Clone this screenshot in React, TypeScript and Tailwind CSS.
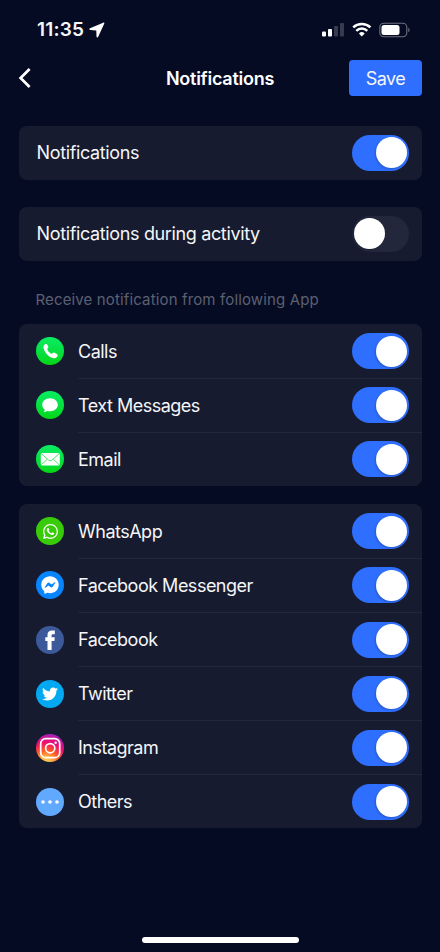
import React, { useState } from 'react';
import clsx from 'clsx';
import {
  FaFacebookMessenger,
  FaTwitter,
  FaWhatsapp,
} from 'react-icons/fa';

interface ToggleProps {
  checked: boolean;
  label: string;
  onChange: () => void;
}

interface AppItem {
  id: string;
  label: string;
  badge: string;
  icon: React.ReactNode;
}

// Phone, messages and mail share the same green badge
const green = 'bg-linear-to-b from-[#0aed62] to-[#04d60b]';

const systemApps: AppItem[] = [
  {
    id: 'calls',
    label: 'Calls',
    badge: green,
    icon: (
      <svg width="28" height="28" viewBox="0 0 28 28" fill="#fff">
        <path d="M8.1 8.1c.8-1 2-1.500 2.700-.9.9.8 1.500 2 1.600 2.900.1.900-1.200 1.300-1.100 2.200.2 1.500 2.800 4.200 4.300 4.500.9.100 1.300-1.300 2.300-1.200.9.200 3.300 1.500 3.700 2.100.7 1.100-.9 2.900-2.500 3.500-2 .6-5.700-1.300-8.200-4-2.700-2.900-4.400-6.900-2.800-9.100z" />
      </svg>
    ),
  },
  {
    id: 'messages',
    label: 'Text Messages',
    badge: green,
    icon: (
      <svg width="28" height="28" viewBox="0 0 28 28" fill="#fff">
        <path d="M14 7.300c4.400 0 7.800 2.900 7.800 6.500s-3.400 6.500-7.800 6.500c-1 0-2-.1-2.900-.4-1 .8-2.300 1.200-3.700 1.100.9-.7 1.400-1.500 1.400-2.300-1.600-1.200-2.600-2.900-2.600-4.900 0-3.600 3.400-6.500 7.800-6.500z" />
      </svg>
    ),
  },
  {
    id: 'email',
    label: 'Email',
    badge: green,
    icon: (
      <svg width="28" height="28" viewBox="0 0 28 28">
        <rect x="4.800" y="8" width="19" height="12.400" rx="1.500" fill="#fff" />
        <path
          d="M5.300 8.600l7.300 6.500q1.700 1.300 3.400 0l7.300-6.500M5.400 19.800l5.800-5.600M23.200 19.800l-5.800-5.600"
          fill="none"
          stroke="#10dd3b"
          strokeWidth=".75"
        />
      </svg>
    ),
  },
];

const socialApps: AppItem[] = [
  {
    id: 'whatsapp',
    label: 'WhatsApp',
    badge: 'bg-[#38cb08]',
    icon: <FaWhatsapp size={17} />,
  },
  {
    id: 'messenger',
    label: 'Facebook Messenger',
    badge: 'bg-[#0785ff]',
    icon: <FaFacebookMessenger size={18} />,
  },
  {
    id: 'facebook',
    label: 'Facebook',
    badge: 'bg-[#3c5a99]',
    icon: (
      <svg width="28" height="28" viewBox="0 0 28 28" fill="#fff">
        <path d="M11.500 24V15.100H9.300v-3.800h2.200V9.100c0-3 1.500-4.600 4.700-4.600h2.600v3.800h-1.700c-1.200 0-1.500.5-1.500 1.400v1.600h3.200l-.4 3.800h-2.800V24z" />
      </svg>
    ),
  },
  {
    id: 'twitter',
    label: 'Twitter',
    badge: 'bg-[#03a9f0]',
    icon: <FaTwitter size={16} />,
  },
  {
    id: 'instagram',
    label: 'Instagram',
    badge:
      'bg-[radial-gradient(circle_at_35%_105%,#ffd35a_0%,#ffb347_20%,#ff5a25_38%,#ee0b72_62%,#a522b8_85%,#5146cf_100%)]',
    icon: (
      <svg width="28" height="28" viewBox="0 0 28 28" fill="none" stroke="#fff" strokeWidth="1.700">
        <rect x="4.700" y="4.700" width="19" height="19" rx="5" />
        <circle cx="14.200" cy="14.200" r="4.600" />
        <circle cx="19.600" cy="8.800" r="1.200" fill="#fff" stroke="none" />
      </svg>
    ),
  },
  {
    id: 'others',
    label: 'Others',
    badge: 'bg-[#61a8ff]',
    icon: (
      <svg width="28" height="28" viewBox="0 0 28 28" fill="#fff">
        <circle cx="7" cy="14" r="1.800" />
        <circle cx="14" cy="14" r="1.800" />
        <circle cx="21" cy="14" r="1.800" />
      </svg>
    ),
  },
];

function Toggle({ checked, label, onChange }: ToggleProps) {
  return (
    <button
      role="switch"
      aria-checked={checked}
      aria-label={label}
      onClick={onChange}
      className={clsx(
        'flex h-9 w-[57.500px] shrink-0 items-center rounded-full px-0.5',
        checked ? 'justify-end bg-[#2f6fff]' : 'justify-start bg-[#23273b]'
      )}
    >
      <span className="size-[31px] rounded-full bg-white shadow-[-1px_1px_2px_rgba(0,0,0,0.2)]" />
    </button>
  );
}

function StatusBar() {
  return (
    <div className="flex h-[60px] items-center justify-between pr-[29px] pl-[37px]">
      <div className="flex items-center gap-[5px]">
        <span className="pt-px text-[19px] font-semibold tracking-[0.2px]">11:35</span>
        <svg width="16" height="16" viewBox="0 0 16 16" fill="#fff">
          <path d="M14.200.7L1 6.300c-1 .5-.8 1.700.3 1.800l6 .4.200 6c.1 1.100 1.200 1.200 1.700.2l6-12.900c.4-.8-.1-1.500-1-1.100z" />
        </svg>
      </div>
      <div className="flex items-center">
        <svg width="23" height="16" viewBox="0 0 23 16" fill="#fff">
          <rect x="0" y="9.500" width="4" height="5" rx="1" />
          <rect x="6" y="7" width="4" height="7.500" rx="1" />
          <rect x="12" y="4" width="4" height="10.500" rx="1" opacity=".2" />
          <rect x="18" y="1" width="4" height="13.500" rx="1" opacity=".2" />
        </svg>
        <svg className="ml-[7px]" width="20" height="16" viewBox="0 0 20 16" fill="none" stroke="#fff" strokeWidth="2.500">
          <path d="M1.200 5.400a12.600 12.600 0 0 1 17.200 0" />
          <path d="M4.300 8.800a8 8 0 0 1 11 0" />
          <path d="M9.800 14.500l-2.900-3a4.200 4.200 0 0 1 5.800 0z" fill="#fff" stroke="none" />
        </svg>
        <svg className="ml-[7px]" width="32" height="16" viewBox="0 0 32 16">
          <rect x=".8" y="1.200" width="27" height="13.600" rx="4" fill="none" stroke="#6d7080" strokeWidth="1.100" />
          <rect x="2.500" y="2.900" width="18" height="10.200" rx="2.500" fill="#fff" />
          <path d="M29.300 5.700c1.700.6 1.700 4 0 4.600z" fill="#6d7080" />
        </svg>
      </div>
    </div>
  );
}

export default function App() {
  const [enabled, setEnabled] = useState<Record<string, boolean>>({
    all: true,
    activity: false,
    calls: true,
    messages: true,
    email: true,
    whatsapp: true,
    messenger: true,
    facebook: true,
    twitter: true,
    instagram: true,
    others: true,
  });

  const toggle = (id: string) => {
    setEnabled((prev) => ({ ...prev, [id]: !prev[id] }));
  };

  const renderSetting = (id: string, label: string) => (
    <div className="flex h-[54px] items-center justify-between rounded-[8px] bg-[#171b30] pr-[12.500px] pl-[18px]">
      <span className="tracking-[-0.36px]">{label}</span>
      <Toggle checked={enabled[id]} label={label} onChange={() => toggle(id)} />
    </div>
  );

  const renderApps = (apps: AppItem[]) => (
    <div className="rounded-[8px] bg-[#171b30]">
      {apps.map((app, i) => (
        <div key={app.id} className="flex h-[54.100px] items-center pl-[17.500px]">
          <div
            className={clsx(
              'mt-px flex size-7 shrink-0 items-center justify-center rounded-full text-white',
              app.badge
            )}
          >
            {app.icon}
          </div>
          <div
            className={clsx(
              'ml-[14px] flex h-full flex-1 items-center justify-between pt-px pr-[12.500px]',
              i > 0 && 'shadow-[inset_0_1px_0_#22273a]'
            )}
          >
            <span className="tracking-[-0.5px]">{app.label}</span>
            <Toggle
              checked={enabled[app.id]}
              label={app.label}
              onChange={() => toggle(app.id)}
            />
          </div>
        </div>
      ))}
    </div>
  );

  return (
    <div className="flex h-[952px] w-[440px] flex-col bg-[#060b24] font-['Inter',sans-serif] text-[18px] text-[#f5f6f8]">
      <StatusBar />

      <header className="grid h-9 grid-cols-[1fr_auto_1fr] items-center pr-[18px] pl-[18px]">
        <button aria-label="Back">
          <svg width="14" height="22" viewBox="0 0 14 22" fill="none" stroke="#fff" strokeWidth="2.700">
            <path d="M11.600 2l-9 9 9 9" />
          </svg>
        </button>
        <h1 className="text-[18px] font-semibold tracking-[-0.25px] text-white">Notifications</h1>
        <button className="h-9 w-[73px] justify-self-end rounded-[4px] bg-[#2f6fff] tracking-[-0.5px]">
          Save
        </button>
      </header>

      <main className="flex flex-col px-[18.500px] pt-[29.500px]">
        {renderSetting('all', 'Notifications')}
        <div className="h-[27px]" />
        {renderSetting('activity', 'Notifications during activity')}
        <p className="flex h-[63px] items-center pt-[16px] pl-[17px] text-[15px] tracking-[0.14px] text-[#5c6070]">
          Receive notification from following App
        </p>
        {renderApps(systemApps)}
        <div className="h-[18px]" />
        {renderApps(socialApps)}
      </main>

      <div className="mx-auto mt-auto mb-[9px] h-1.5 w-[157px] rounded-full bg-white" />
    </div>
  );
}
